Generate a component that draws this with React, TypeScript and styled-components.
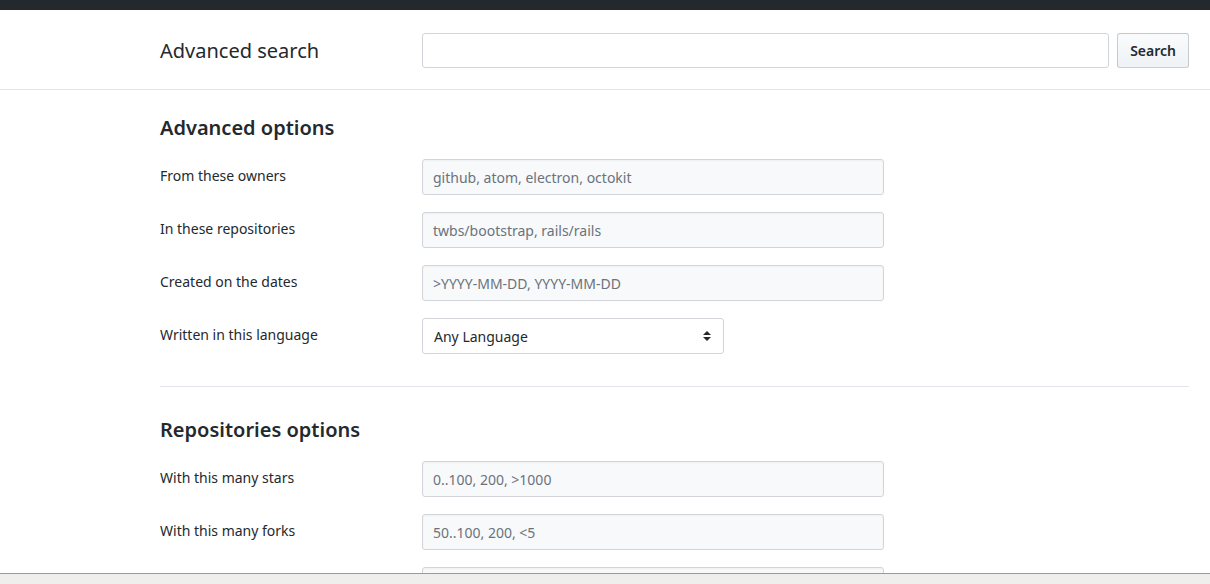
import styled, { createGlobalStyle } from "styled-components";

const colors = {
  dark: "#24292e",
  text: "#24292e",
  muted: "#6a737d",
  border: "#d1d5da",
  divider: "#e1e4e8",
  inputBg: "#f8f9fa",
};

const GlobalStyle = createGlobalStyle`
  html, body {
    margin: 0;
    padding: 0;
    background: #fff;
    overflow: hidden;
  }
  body {
    font-family: "Noto Sans", "Open Sans", Arial, sans-serif;
    color: ${colors.text};
  }
  * { box-sizing: border-box; }
`;

const Page = styled.div`
  height: 584px;
  overflow: hidden;
  position: relative;
`;

const TopBar = styled.div`
  height: 10px;
  background: ${colors.dark};
`;

const Header = styled.header`
  border-bottom: 1px solid ${colors.divider};
  padding: 23px 21px 21px 160px;
  display: flex;
  align-items: center;
`;

const PageTitle = styled.h1`
  margin: 0;
  width: 262px;
  font-size: 20px;
  font-weight: 400;
  line-height: 34px;
`;

const SearchInput = styled.input`
  flex: 1;
  height: 35px;
  border: 1px solid ${colors.border};
  border-radius: 3px;
  background: #fff;
  padding: 6px 8px;
  font: inherit;
  font-size: 14px;
  outline: none;
`;

const Button = styled.button`
  margin-left: 8px;
  height: 35px;
  padding: 0 12px;
  border: 1px solid rgba(27, 31, 35, 0.2);
  border-radius: 3px;
  background: linear-gradient(-180deg, #fafbfc 0%, #eff3f6 90%);
  color: ${colors.text};
  font-family: inherit;
  font-size: 14px;
  font-weight: 600;
`;

const Main = styled.main`
  padding: 23px 21px 0 160px;
`;

const Section = styled.section`
  display: flex;
  flex-direction: column;
  gap: 17px;
  padding-bottom: 32px;
`;

const SectionTitle = styled.h2`
  margin: 0 0 -1px;
  font-size: 20px;
  font-weight: 600;
  line-height: 30px;
`;

const Divider = styled.hr`
  margin: 0 0 28px;
  border: 0;
  border-top: 1px solid ${colors.divider};
`;

const FieldRow = styled.div`
  display: flex;
  align-items: center;
  height: 36px;
`;

const Label = styled.label`
  width: 262px;
  font-size: 14px;
  margin-top: -3px;
`;

const TextField = styled.input`
  width: 462px;
  height: 36px;
  border: 1px solid ${colors.border};
  border-radius: 3px;
  background: ${colors.inputBg};
  padding: 0 10px;
  font: inherit;
  font-size: 14px;
  color: ${colors.text};
  outline: none;
  box-shadow: inset 0 1px 2px rgba(27, 31, 35, 0.04);

  &::placeholder {
    color: ${colors.muted};
  }
`;

const SelectBox = styled.div`
  width: 302px;
  height: 36px;
  border: 1px solid ${colors.border};
  border-radius: 3px;
  background: #fff;
  padding: 0 12px 0 11px;
  display: flex;
  align-items: center;
  justify-content: space-between;
  font-size: 14px;
`;

const BottomBar = styled.div`
  position: absolute;
  left: 0;
  right: 0;
  bottom: 0;
  height: 11px;
  background: #f0eded;
  border-top: 1px solid #9a9a9a;
`;

const SortArrows = () => (
  <svg width="8" height="12" viewBox="0 0 8 12" fill="#24292e">
    <path d="M4 1 L8 5 L0 5 Z" />
    <path d="M4 11 L8 7 L0 7 Z" />
  </svg>
);

const advancedFields = [
  { label: "From these owners", placeholder: "github, atom, electron, octokit" },
  { label: "In these repositories", placeholder: "twbs/bootstrap, rails/rails" },
  { label: "Created on the dates", placeholder: ">YYYY-MM-DD, YYYY-MM-DD" },
];

const repoFields = [
  { label: "With this many stars", placeholder: "0..100, 200, >1000" },
  { label: "With this many forks", placeholder: "50..100, 200, <5" },
  { label: "Of this size", placeholder: "Repository size in KB" },
];

export default function App() {
  return (
    <>
      <GlobalStyle />
      <Page>
        <TopBar />
        <Header>
          <PageTitle>Advanced search</PageTitle>
          <SearchInput type="text" />
          <Button type="button">Search</Button>
        </Header>
        <Main>
          <Section>
            <SectionTitle>Advanced options</SectionTitle>
            {advancedFields.map((f) => (
              <FieldRow key={f.label}>
                <Label>{f.label}</Label>
                <TextField placeholder={f.placeholder} />
              </FieldRow>
            ))}
            <FieldRow>
              <Label>Written in this language</Label>
              <SelectBox>
                <span>Any Language</span>
                <SortArrows />
              </SelectBox>
            </FieldRow>
          </Section>
          <Divider />
          <Section>
            <SectionTitle>Repositories options</SectionTitle>
            {repoFields.map((f) => (
              <FieldRow key={f.label}>
                <Label>{f.label}</Label>
                <TextField placeholder={f.placeholder} />
              </FieldRow>
            ))}
          </Section>
        </Main>
        <BottomBar />
      </Page>
    </>
  );
}
